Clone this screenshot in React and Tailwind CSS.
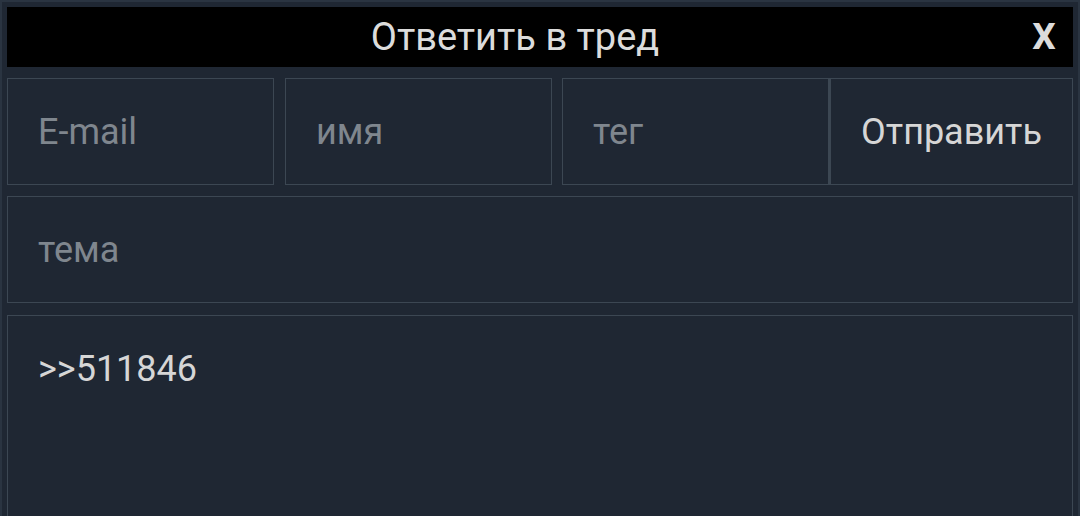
import React from 'react';

const Field = ({ placeholder, className = '' }) => (
  <div className={`flex items-center h-[107px] border border-[#3c4753] px-[30px] text-[36px] text-[#7f868e] ${className}`}>
    {placeholder}
  </div>
);

export default function App() {
  return (
    <div
      className="w-[1080px] h-[516px] overflow-hidden bg-[#1f2733] border-2 border-b-0 border-[#2a3441] px-[5px] pt-[5px] flex flex-col"
      style={{ fontFamily: 'Roboto, "Noto Sans", sans-serif' }}
    >
      {/* header */}
      <div className="h-[60px] shrink-0 bg-black flex items-center">
        <div className="flex-1 text-center text-[38px] text-[#dcdcdc] pl-[2px]">Ответить в тред</div>
        <div className="w-[46px] mr-[6px] text-[37px] font-bold text-[#dcdcdc] text-center">X</div>
      </div>

      {/* email / name / tag / send */}
      <div className="flex mt-[11px] shrink-0">
        <Field placeholder="E-mail" className="w-[267px]" />
        <Field placeholder="имя" className="w-[267px] ml-[11px]" />
        <Field placeholder="тег" className="w-[267px] ml-[10px]" />
        <button className="flex-1 h-[107px] border border-l-2 border-[#3c4753] text-[36px] text-[#d6d6d6] text-center">
          Отправить
        </button>
      </div>

      {/* subject */}
      <Field placeholder="тема" className="mt-[11px] shrink-0" />

      {/* message */}
      <div className="mt-[12px] h-[260px] shrink-0 border border-[#3c4753] px-[30px] pt-[26px] text-[36px] text-[#d6d6d6]">
        &gt;&gt;511846
      </div>
    </div>
  );
}
